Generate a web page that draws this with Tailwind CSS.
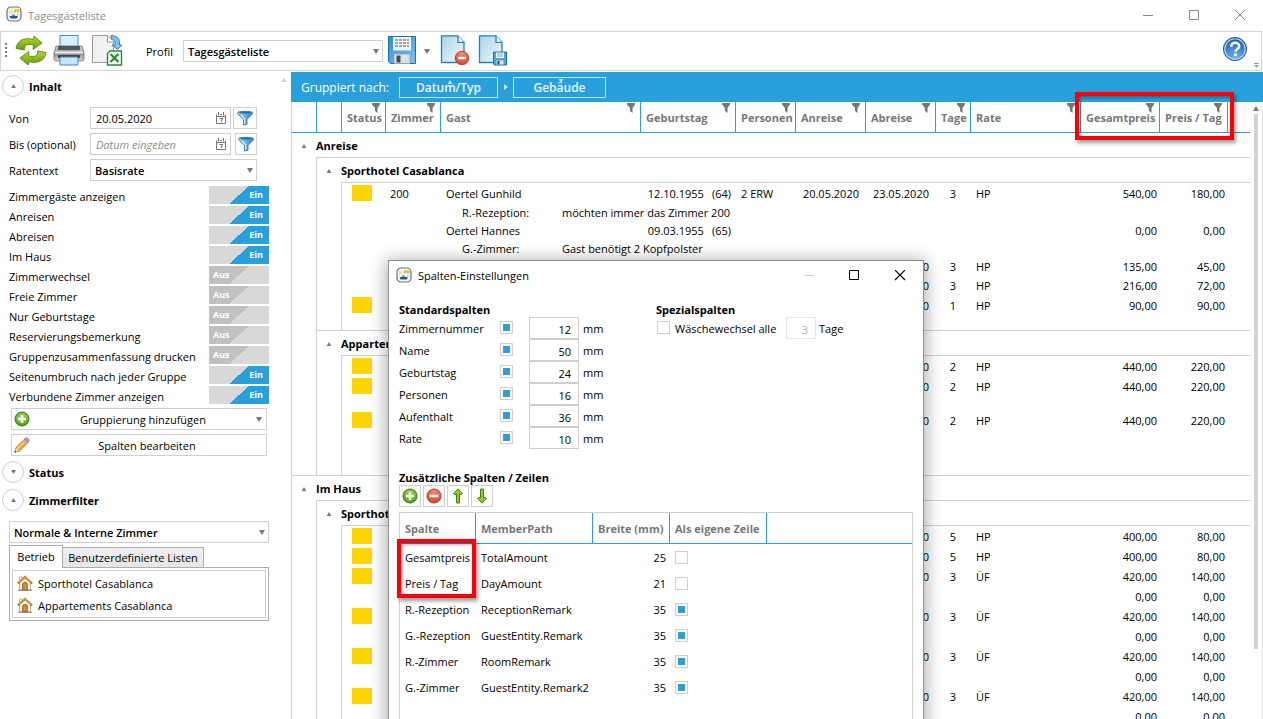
<!DOCTYPE html>
<html lang="de">
<head>
<meta charset="utf-8">
<meta name="viewport" content="width=device-width, initial-scale=1">
<title>Tagesgästeliste</title>
<script src="https://cdn.jsdelivr.net/npm/@tailwindcss/browser@4"></script>
</head>
<body class="bg-white text-black text-[11px] leading-[18px] font-['Open_Sans',sans-serif]">

<!-- Shared symbols -->
<svg class="absolute h-0 w-0" aria-hidden="true">
  <defs>
    <linearGradient id="gGreen" x1="0" y1="0" x2="0" y2="1"><stop offset="0" stop-color="#b4dc2c"/><stop offset="1" stop-color="#5f9e0e"/></linearGradient>
    <linearGradient id="gBlue" x1="0" y1="0" x2="1" y2="0"><stop offset="0" stop-color="#a8d8f6"/><stop offset="1" stop-color="#2f86cc"/></linearGradient>
    <linearGradient id="gPage" x1="0" y1="0" x2="1" y2="1"><stop offset="0" stop-color="#a9d4e4"/><stop offset="1" stop-color="#f2fafc"/></linearGradient>
    <linearGradient id="gDisk" x1="0" y1="0" x2="1" y2="1"><stop offset="0" stop-color="#2b8fd6"/><stop offset="1" stop-color="#7cc4f2"/></linearGradient>
    <linearGradient id="gGrey" x1="0" y1="0" x2="0" y2="1"><stop offset="0" stop-color="#d2d2d2"/><stop offset=".5" stop-color="#8d8d8d"/><stop offset="1" stop-color="#d8d8d8"/></linearGradient>
    <radialGradient id="gPlus" cx=".5" cy=".3" r=".8"><stop offset="0" stop-color="#9ed84a"/><stop offset="1" stop-color="#3f9a10"/></radialGradient>
    <radialGradient id="gMinus" cx=".5" cy=".2" r=".9"><stop offset="0" stop-color="#f58a70"/><stop offset="1" stop-color="#d63a28"/></radialGradient>
    <radialGradient id="gHelp" cx=".5" cy=".9" r=".9"><stop offset="0" stop-color="#6fb6f2"/><stop offset="1" stop-color="#1b57a8"/></radialGradient>
  </defs>
  <symbol id="app" viewBox="0 0 16 16">
    <rect x="1" y="1" width="14" height="14" rx="4" fill="#f6f8f2" stroke="#6b7478" stroke-width="1.200"/>
    <path d="M3 4.500h1.500V8H3zM5 3.500h1.500V8H5z" fill="#efe3a0"/><path d="M8 3.500h3L10 6.500H8z" fill="#f0b020"/><path d="M11 3h2.500v3.500H11z" fill="#e8c23a"/>
    <path d="M3.500 10h8v1.500l-1 1h-6z" fill="#245a80"/><path d="M6 8.500h3v1.500H6z" fill="#5c9ac0"/><path d="M11 8h1.500v1.500H11z" fill="#9fb8c2"/>
  </symbol>
  <symbol id="up" viewBox="0 0 6 5"><path d="M3 0 6 5H0z" fill="currentColor"/></symbol>
  <symbol id="down" viewBox="0 0 6 5"><path d="M3 5 6 0H0z" fill="currentColor"/></symbol>
  <symbol id="filter" viewBox="0 0 8 10"><path d="M0 0h8v1.500L5.500 5v5L3 8V5L0 1.500z" fill="#777"/></symbol>
  <symbol id="funnel" viewBox="0 0 16 16">
    <path d="M.6 2.500C.6 1 15.400 1 15.400 2.500v1.300L10 9.500v4.800L6.500 15V9.500L.6 3.800z" fill="url(#gBlue)" stroke="#2b78b8" stroke-width=".9"/>
    <ellipse cx="8" cy="2.600" rx="6" ry="1" fill="#1f6fae"/><path d="M4 5l3.600 4v5" stroke="#dff2fd" stroke-width="1.200" fill="none"/>
  </symbol>
  <symbol id="cal" viewBox="0 0 10 12">
    <path d="M.5 2.500v9h9v-9M.5 4.500h9" fill="none" stroke="#777"/><path d="M2.500 0v3.500M7.500 0v3.500M4 2.500h2" stroke="#777" fill="none"/>
    <path d="M3.500 6.500h3L5 10" stroke="#777" stroke-width="1.100" fill="none"/>
  </symbol>
  <symbol id="plus" viewBox="0 0 16 16"><circle cx="8" cy="8" r="7" fill="url(#gPlus)" stroke="#2f7d0c"/><path d="M8 4v8M4 8h8" stroke="#fff" stroke-width="2.600"/></symbol>
  <symbol id="minus" viewBox="0 0 16 16"><circle cx="8" cy="8" r="7" fill="url(#gMinus)" stroke="#c03526"/><path d="M3.500 8h9" stroke="#fff" stroke-width="2.600"/></symbol>
  <symbol id="arrowup" viewBox="0 0 16 16"><path d="M8 .8 12.300 5.500 10.800 7 9.500 6v9h-3V6L5.200 7 3.700 5.500z" fill="#8fcb1e" stroke="#3f8410" stroke-width="1"/></symbol>
  <symbol id="arrowdown" viewBox="0 0 16 16"><path d="M8 15.200 12.300 10.500 10.800 9 9.500 10V1h-3v9L5.200 9 3.700 10.500z" fill="#8fcb1e" stroke="#3f8410" stroke-width="1"/></symbol>
  <symbol id="pencil" viewBox="0 0 16 16">
    <path d="M.8 15.200 2 10.500 11 1.800l3.400 3.400L5.500 14z" fill="#f7a531" stroke="#a8651a" stroke-width=".8"/><path d="M3.500 11.500l8-7.800" stroke="#ffd68a" stroke-width="1.300"/>
    <path d="M10.500 2.200 12 .8c1-.8 3.800 1.800 3 3L13.800 5.500z" fill="#d78bc0" stroke="#8c6a86" stroke-width=".7"/><path d="M9.500 3.200l3.400 3.400" stroke="#9cc4cf" stroke-width="1.500"/>
    <path d="M.8 15.200 2 10.800l3.300 3.100z" fill="#f4d9ae"/><path d="M.6 15.500l.6-2 1.400 1.300z" fill="#333"/>
  </symbol>
  <symbol id="house" viewBox="0 0 16 16">
    <path d="M2.500 2h2.500v4H2.500z" fill="#fff" stroke="#999" stroke-width=".7"/><path d="M2.500 7 8 2.500 13.500 7v8h-11z" fill="#f7f0de" stroke="#8a8a8a" stroke-width=".7"/>
    <path d="M.8 8.500 8 1.800l7.200 6.700" fill="none" stroke="#b9741c" stroke-width="2"/><path d="M2 7.300 8 1.700l6 5.600" fill="none" stroke="#eebc60" stroke-width=".7"/>
    <path d="M5.700 15V9q0-1.500 2.300-1.500T10.300 9v6z" fill="#d6902c" stroke="#7c4c12" stroke-width=".8"/><path d="M1 15.300h14" stroke="#888"/>
  </symbol>
</svg>

<div class="relative flex h-screen flex-col overflow-hidden">

  <!-- Window title bar -->
  <header class="flex h-[31px] shrink-0 items-center text-[#8c8c8c]">
    <svg class="mb-1 ml-1.5 h-4 w-4"><use href="#app"/></svg>
    <h1 class="ml-1.5">Tagesgästeliste</h1>
    <div class="ml-auto flex">
      <button class="grid h-[30px] w-[46px] place-items-center" aria-label="Minimieren"><svg class="h-3 w-3" viewBox="0 0 12 12" stroke="#888"><path d="M1 5.500h10"/></svg></button>
      <button class="grid h-[30px] w-[46px] place-items-center" aria-label="Maximieren"><svg class="h-3 w-3" viewBox="0 0 12 12" stroke="#888" fill="none"><path d="M1.500 .5h9v9h-9z"/></svg></button>
      <button class="grid h-[30px] w-[46px] place-items-center" aria-label="Schließen"><svg class="h-3 w-3" viewBox="0 0 12 12" stroke="#888"><path d="M1 0l10 10M11 0L1 10"/></svg></button>
    </div>
  </header>

  <!-- Toolbar -->
  <div class="mr-px flex h-10 shrink-0 items-center border border-[#d6d6d6]" role="toolbar">
    <svg class="ml-1 h-[17px] w-[2px] shrink-0" viewBox="0 0 2 17" fill="#777"><path d="M0 0h2v2H0zM0 4h2v2H0zM0 8h2v2H0zM0 12h2v2H0z"/></svg>
    <button class="ml-2 h-8 w-8" aria-label="Aktualisieren"><svg class="h-8 w-8" viewBox="0 0 32 32" stroke="#5a8a10" stroke-width=".9" fill="url(#gGreen)">
      <path d="M1 13.500C2 5 10 2 18 4.500l1-3.500 8 7-9 6.500.5-4.500C13 8.500 8.500 10 9.500 15z"/>
      <path d="M31 17.500C30 26 22 29 14 26.500l-1 3.500-8-7 9-6.500-.5 4.500C19 22.500 23.500 21 22.500 16z"/></svg></button>
    <button class="ml-1.5 h-8 w-8" aria-label="Drucken"><svg class="h-8 w-8" viewBox="0 0 32 32">
      <path d="M3 11h26l2 7v6q0 2-2 2H3q-2 0-2-2v-6z" fill="url(#gGrey)" stroke="#777" stroke-width=".8"/>
      <path d="M7 .5h18V11H7z" fill="#d7eefb" stroke="#3b8cc6"/><path d="M5 11h22v4H5z" fill="#555"/><path d="M2 16.500h28v2H2z" fill="#eee"/><path d="M5 20h22v3H5z" fill="#444"/>
      <path d="M7 22h18v8H7z" fill="#c4e5f8" stroke="#3b8cc6"/><path d="M26 15.500h3" stroke="#8f8"/></svg></button>
    <button class="ml-1.5 h-8 w-8" aria-label="Nach Excel exportieren"><svg class="h-8 w-8" viewBox="0 0 32 32">
      <path d="M1.500 .5h15l6 6.500v20.500h-21z" fill="#f1f1f1" stroke="#9a9a9a"/><path d="M16.500 .5V7h6" fill="#fff" stroke="#9a9a9a"/>
      <path d="M20 .5c7 0 9 4 8.500 9.500H31l-4.500 4.500L21 10h3c.5-3-1-6-4-6z" fill="#7fc0ea" stroke="#2f7db8" stroke-width=".9"/>
      <path d="M19 16h11.500v14H16.500V18.500z" fill="#f6fbf4" stroke="#2c8a36" stroke-width="1.400"/><path d="M19.500 19l8 8M27.500 19l-8 8" stroke="#2c8a36" stroke-width="2.300"/></svg></button>
    <label for="profil" class="ml-[23px] w-[29px] pt-0.5">Profil</label>
    <div class="ml-2 grid w-[200px] items-center">
      <select id="profil" class="[grid-area:1/1] h-[22px] w-full appearance-none border border-[#cfcfcf] bg-white pt-px pl-1 font-semibold outline-none"><option>Tagesgästeliste</option></select>
      <svg class="[grid-area:1/1] pointer-events-none mr-1 h-[5px] w-[6px] justify-self-end text-[#777]"><use href="#down"/></svg>
    </div>
    <button class="ml-1 h-8 w-[30px]" aria-label="Speichern"><svg class="h-8 w-[30px]" viewBox="0 0 30 32">
      <path d="M1.500 1.500h27v27H3.500l-2-2z" fill="url(#gDisk)" stroke="#1b6fae"/><path d="M6 2h18v13.500H6z" fill="#eef6fb"/>
      <path d="M8 5h14M8 8h14M8 11h14" stroke="#555" stroke-width="1.200" stroke-dasharray="3 1"/><path d="M7 19h16v9.500H7z" fill="#dce2e8" stroke="#8ea6b8" stroke-width=".8"/><path d="M9.500 20.500h4v7h-4z" fill="#484c50"/></svg></button>
    <button class="ml-0.5 grid h-8 w-4 place-items-center" aria-label="Speicheroptionen"><svg class="h-[5px] w-[6px] text-[#777]"><use href="#down"/></svg></button>
    <button class="ml-[5px] h-8 w-8" aria-label="Profil löschen"><svg class="h-8 w-8" viewBox="0 0 32 32">
      <path d="M1.500 .8H18l6 6.500v20.200H1.500z" fill="url(#gPage)" stroke="#1d86c0" stroke-width="1.300"/><path d="M18 .8v6.500h6" fill="#fff" stroke="#1d86c0" stroke-width="1.300"/>
      <circle cx="22" cy="23" r="6.800" fill="url(#gMinus)" stroke="#b5301f" stroke-width=".8"/><path d="M18 23h8" stroke="#fff" stroke-width="2.400"/></svg></button>
    <button class="ml-1.5 h-8 w-8" aria-label="Profil speichern unter"><svg class="h-8 w-8" viewBox="0 0 32 32">
      <path d="M1.500 .8H18l6 6.500v20.200H1.500z" fill="url(#gPage)" stroke="#1d86c0" stroke-width="1.300"/><path d="M18 .8v6.500h6" fill="#fff" stroke="#1d86c0" stroke-width="1.300"/>
      <path d="M15.500 17H28.500v13H16.500l-1-1z" fill="#4aa6de" stroke="#1b6fae"/><path d="M18 17.500h8V23h-8z" fill="#eef6fb"/><path d="M19 19h6M19 21h6" stroke="#888" stroke-width=".8"/><path d="M18.500 25.500h7v4h-7z" fill="#dce2e8"/><path d="M19.500 26h2v3.500h-2z" fill="#444"/></svg></button>
    <button class="mr-[5px] mb-1 ml-auto h-[26px] w-[26px]" aria-label="Hilfe"><svg class="h-[26px] w-[26px]" viewBox="0 0 28 28"><circle cx="14" cy="14" r="12.500" fill="url(#gHelp)" stroke="#1b4f94"/><circle cx="14" cy="14" r="11" fill="none" stroke="#b9d8f4" stroke-width="1.200"/>
      <path d="M10 11.500c0-5.500 8.500-5.500 8.500-.5 0 3-4 3.200-4 6" fill="none" stroke="#fff" stroke-width="2.600"/><path d="M13 18.800h3v2.800h-3z" fill="#fff"/></svg></button>
    <svg class="mr-px mb-0.5 h-[5px] w-[7px] self-end" viewBox="0 0 7 5" fill="#999"><path d="M1 0h5v1H1zM1 2h5L3.500 4.800z"/></svg>
  </div>

  <main class="flex min-h-0 grow">

    <!-- Filter panel -->
    <aside class="flex w-[291px] shrink-0 flex-col pt-1">
      <div class="flex items-center">
        <button class="ml-0.5 grid h-[22px] w-[22px] place-items-center rounded-full border border-[#cfcfcf] text-[#777]" aria-label="Inhalt einklappen"><svg class="h-[4px] w-[5px]"><use href="#up"/></svg></button>
        <h2 class="ml-[5px] pt-0.5 font-bold">Inhalt</h2>
        <svg class="mr-1 mb-3 ml-auto h-[4px] w-[6px] text-[#ccc]"><use href="#up"/></svg>
      </div>
      <div class="mt-[10px] ml-[9px] flex w-[248px] flex-col gap-1">
        <div class="flex h-[22px] items-center">
          <label for="von" class="w-[81px] pt-0.5">Von</label>
          <div class="flex h-[22px] grow items-center border border-[#cfcfcf] pr-1"><input id="von" class="w-0 grow pt-0.5 pl-[5px] outline-none" value="20.05.2020"><svg class="h-3 w-[10px]"><use href="#cal"/></svg></div>
          <button class="ml-0.5 grid h-[22px] w-6 place-items-center border border-[#cfcfcf]" aria-label="Filter Von"><svg class="h-4 w-4"><use href="#funnel"/></svg></button>
        </div>
        <div class="flex h-[22px] items-center">
          <label for="bis" class="w-[81px] pt-0.5">Bis (optional)</label>
          <div class="flex h-[22px] grow items-center border border-[#cfcfcf] pr-1"><input id="bis" class="w-0 grow pt-0.5 pl-[5px] outline-none placeholder:text-[#8c8c8c] placeholder:italic" placeholder="Datum eingeben"><svg class="h-3 w-[10px]"><use href="#cal"/></svg></div>
          <button class="ml-1 grid h-[22px] w-[22px] place-items-center border border-[#cfcfcf]" aria-label="Filter Bis"><svg class="h-4 w-4"><use href="#funnel"/></svg></button>
        </div>
        <div class="flex h-[22px] items-center">
          <label for="rate" class="w-[81px] pt-0.5">Ratentext</label>
          <div class="grid grow items-center">
            <select id="rate" class="[grid-area:1/1] h-[22px] w-full appearance-none border border-[#cfcfcf] bg-white pt-px pl-1 font-semibold outline-none"><option>Basisrate</option></select>
            <svg class="[grid-area:1/1] pointer-events-none mr-1 h-[5px] w-[6px] justify-self-end text-[#777]"><use href="#down"/></svg>
          </div>
        </div>
      </div>
      <div id="toggles" class="mt-1 ml-[9px] w-[260px]"></div>
      <div class="mt-[3px] ml-[11px] flex w-[256px] flex-col gap-1">
        <button class="flex h-[22px] items-center border border-[#cfcfcf] px-[2px]"><svg class="h-4 w-4"><use href="#plus"/></svg><span class="grow pt-0.5">Gruppierung hinzufügen</span><svg class="mr-0.5 h-[5px] w-[6px] text-[#777]"><use href="#down"/></svg></button>
        <button class="flex h-[22px] items-center border border-[#cfcfcf] px-[2px]"><svg class="h-4 w-4"><use href="#pencil"/></svg><span class="grow pt-0.5">Spalten bearbeiten</span></button>
      </div>
      <div class="mt-[5px] flex items-center">
        <button class="ml-0.5 grid h-[22px] w-[22px] place-items-center rounded-full border border-[#cfcfcf] text-[#777]" aria-label="Status ausklappen"><svg class="h-[4px] w-[5px]"><use href="#down"/></svg></button>
        <h2 class="ml-[5px] pt-0.5 font-bold">Status</h2>
      </div>
      <div class="mt-1.5 flex items-center">
        <button class="ml-0.5 grid h-[22px] w-[22px] place-items-center rounded-full border border-[#cfcfcf] text-[#777]" aria-label="Zimmerfilter einklappen"><svg class="h-[4px] w-[5px]"><use href="#up"/></svg></button>
        <h2 class="ml-[5px] pt-0.5 font-bold">Zimmerfilter</h2>
      </div>
      <div class="mt-[10px] ml-[9px] w-[260px]">
        <div class="grid items-center">
          <select aria-label="Zimmerart" class="[grid-area:1/1] h-[22px] w-full appearance-none border border-[#cfcfcf] bg-white pt-px pl-1 font-semibold outline-none"><option>Normale &amp; Interne Zimmer</option></select>
          <svg class="[grid-area:1/1] pointer-events-none mr-1 h-[5px] w-[6px] justify-self-end text-[#777]"><use href="#down"/></svg>
        </div>
        <div class="mt-0.5 flex items-end" role="tablist">
          <button role="tab" aria-selected="true" class="z-10 -mb-px h-[23px] w-[54px] border border-b-0 border-[#acacac] bg-white">Betrieb</button>
          <button role="tab" aria-selected="false" class="-ml-px h-5 w-[142px] border border-b-0 border-[#acacac] bg-gradient-to-b from-[#f0f0f0] to-[#e5e5e5] pt-px whitespace-nowrap">Benutzerdefinierte Listen</button>
        </div>
        <div class="border border-[#acacac] p-0.5">
          <ul class="border border-[#cfcfcf] px-1 py-px">
            <li class="flex h-[22px] items-center gap-[5px]"><svg class="h-4 w-4"><use href="#house"/></svg><span class="pt-0.5">Sporthotel Casablanca</span></li>
            <li class="flex h-[22px] items-center gap-[5px]"><svg class="h-4 w-4"><use href="#house"/></svg><span class="pt-0.5">Appartements Casablanca</span></li>
          </ul>
        </div>
      </div>
    </aside>

    <!-- Guest list -->
    <section class="flex min-w-0 grow flex-col pt-px">
      <div class="flex h-[30px] shrink-0 items-center bg-[#27a0db] pl-[10px] text-white">
        <span class="w-[98px] pt-0.5 text-[12px]">Gruppiert nach:</span>
        <button class="relative h-[21px] w-[99px] border border-white/70 pt-px text-[12px] font-semibold text-white/90">Datum/Typ<svg class="absolute top-[2px] left-[47px] h-[4px] w-[6px] text-white/70"><use href="#up"/></svg></button>
        <svg class="mr-[5px] ml-1.5 h-[6px] w-[4px]" viewBox="0 0 4 6" fill="#cfeaf8"><path d="M0 0l4 3-4 3z"/></svg>
        <button class="relative h-[21px] w-[93px] border border-white/70 pt-px text-[12px] font-semibold text-white/90">Gebäude<svg class="absolute top-[1px] left-[44px] h-[4px] w-[6px] text-white/70"><use href="#down"/></svg></button>
      </div>
      <div class="flex min-h-0 grow">
        <div class="min-w-0 grow overflow-hidden">
          <table class="w-full table-fixed border-separate border-spacing-0 leading-4 whitespace-nowrap">
            <colgroup><col class="w-[25px]"><col class="w-[25px]"><col class="w-[44px]"><col class="w-[55px]"><col class="w-[200px]"><col class="w-[95px]"><col class="w-[60px]"><col class="w-[70px]"><col class="w-[70px]"><col class="w-[35px]"><col class="w-[110px]"><col class="w-[79px]"><col class="w-[68px]"><col></colgroup>
            <thead><tr id="head" class="h-[31px]"></tr></thead>
            <tbody id="rows"></tbody>
          </table>
        </div>
        <div class="flex w-[13px] shrink-0 flex-col items-center border-r border-[#e0e0e0] pt-1" aria-hidden="true">
          <svg class="mb-[3px] h-[5px] w-[6px] text-[#777]"><use href="#up"/></svg>
          <div class="h-[535px] w-1 bg-[#d2d2d2]"></div>
        </div>
      </div>
    </section>
  </main>

  <!-- Marker around the two price columns -->
  <div class="pointer-events-none absolute top-[92px] left-[1075px] h-[48px] w-[159px] border-4 border-[#fb0007] shadow-[2px_3px_4px_rgba(0,0,0,0.4),inset_2px_2px_3px_rgba(0,0,0,0.3)]"></div>

  <!-- Column settings dialog -->
  <div role="dialog" aria-labelledby="dlgTitle" class="absolute top-[260px] left-[388px] h-[480px] w-[536px] border border-[#909090] bg-white pl-[10px] shadow-[0_2px_16px_2px_rgba(0,0,0,0.32)]">
    <div class="flex h-[30px] items-center">
      <svg class="mb-0.5 -ml-[3px] h-4 w-4"><use href="#app"/></svg>
      <h2 id="dlgTitle" class="ml-1.5">Spalten-Einstellungen</h2>
      <div class="ml-auto flex">
        <button disabled class="grid h-[30px] w-[46px] place-items-center" aria-label="Dialog minimieren"><svg class="h-3 w-3" viewBox="0 0 12 12" stroke="#ccc"><path d="M0 5.500h10"/></svg></button>
        <button class="grid h-[30px] w-[44px] place-items-center" aria-label="Dialog maximieren"><svg class="h-3 w-3" viewBox="0 0 12 12" stroke="#000" fill="none"><path d="M.5 .5h9v9h-9z"/></svg></button>
        <button class="grid h-[30px] w-[46px] place-items-center" aria-label="Dialog schließen"><svg class="h-3 w-3" viewBox="0 0 12 12" stroke="#000" stroke-width="1.100"><path d="M1 0l10 10M11 0L1 10"/></svg></button>
      </div>
    </div>
    <div class="mt-[10px] flex">
      <div class="w-[257px]">
        <h3 class="h-4 font-bold">Standardspalten</h3>
        <div id="std"></div>
      </div>
      <div>
        <h3 class="h-4 font-bold">Spezialspalten</h3>
        <div class="flex h-[22px] items-center">
          <input id="wasch" type="checkbox" class="mb-0.5 ml-px h-[13px] w-[13px] appearance-none border border-[#cfcfcf] p-[2px]">
          <label for="wasch" class="ml-[5px] w-[111px] pt-0.5">Wäschewechsel alle</label>
          <input disabled value="3" aria-label="Intervall in Tagen" class="h-[22px] w-[30px] border border-[#e6e6e6] pt-0.5 pr-[7px] text-right text-[#b5b5b5]">
          <span class="ml-[3px] pt-0.5">Tage</span>
        </div>
      </div>
    </div>
    <h3 class="mt-[20px] h-4 font-bold">Zusätzliche Spalten / Zeilen</h3>
    <div class="flex gap-0.5">
      <button class="grid h-[22px] w-[22px] place-items-center border border-[#cfcfcf]" aria-label="Hinzufügen"><svg class="h-4 w-4"><use href="#plus"/></svg></button>
      <button class="grid h-[22px] w-[22px] place-items-center border border-[#cfcfcf]" aria-label="Entfernen"><svg class="h-4 w-4"><use href="#minus"/></svg></button>
      <button class="grid h-[22px] w-[22px] place-items-center border border-[#cfcfcf]" aria-label="Nach oben"><svg class="h-4 w-4"><use href="#arrowup"/></svg></button>
      <button class="grid h-[22px] w-[22px] place-items-center border border-[#cfcfcf]" aria-label="Nach unten"><svg class="h-4 w-4"><use href="#arrowdown"/></svg></button>
    </div>
    <div class="mt-[5px] mr-[10px] h-[240px] border border-[#cfcfcf]">
      <table class="w-full table-fixed border-separate border-spacing-0 whitespace-nowrap">
        <colgroup><col class="w-[76px]"><col class="w-[117px]"><col class="w-[77px]"><col class="w-[97px]"><col></colgroup>
        <thead><tr class="h-[31px] text-left text-[#777]">
          <th class="border-r border-b border-[#27a0db] pt-0.5 pl-[5px] font-bold">Spalte</th>
          <th class="border-r border-b border-[#27a0db] pt-0.5 pl-[5px] font-bold">MemberPath</th>
          <th class="border-r border-b border-[#27a0db] pt-0.5 pl-[5px] font-bold">Breite (mm)</th>
          <th class="border-r border-b border-[#27a0db] pt-0.5 pl-[5px] font-bold">Als eigene Zeile</th>
          <th class="border-b border-[#27a0db]"></th>
        </tr></thead>
        <tbody id="extra"></tbody>
      </table>
    </div>
  </div>

  <!-- Marker around the two extra columns -->
  <div class="pointer-events-none absolute top-[539px] left-[397px] h-[59px] w-[79px] border-4 border-[#fb0007] shadow-[2px_3px_4px_rgba(0,0,0,0.4),inset_2px_2px_3px_rgba(0,0,0,0.3)]"></div>
</div>

<script>
const $ = id => document.getElementById(id);

// Display options
$('toggles').innerHTML = [['Zimmergäste anzeigen',1],['Anreisen',1],['Abreisen',1],['Im Haus',1],['Zimmerwechsel',0],['Freie Zimmer',0],['Nur Geburtstage',0],['Reservierungsbemerkung',0],['Gruppenzusammenfassung drucken',0],['Seitenumbruch nach jeder Gruppe',1],['Verbundene Zimmer anzeigen',1]]
.map(([t, on], i) => `<div class="flex h-5 items-center justify-between"><label for="t${i}" class="pt-1 whitespace-nowrap">${t}</label>
<div class="grid h-[18px] w-[60px] shrink-0 text-[9px] font-bold leading-[18px] text-white">
<input id="t${i}" type="checkbox" ${on ? 'checked' : ''} class="[grid-area:1/1] appearance-none bg-[linear-gradient(138deg,#c0c0c0_50%,#d8d8d8_50%)] checked:bg-[linear-gradient(138deg,#d8d8d8_50%,#27a0db_50%)]">
<span class="${on ? '[grid-area:1/1] pointer-events-none justify-self-end pr-1.5' : '[grid-area:1/1] pointer-events-none pl-1'}">${on ? 'Ein' : 'Aus'}</span></div></div>`).join('');

// Column headers
$('head').innerHTML = '<th class="border-b border-l border-b-[#27a0db] border-l-[#cfcfcf]"></th><th class="border-b border-l border-[#27a0db]"></th>' +
['Status','Zimmer','Gast','Geburtstag','Personen','Anreise','Abreise','Tage','Rate','Gesamtpreis','Preis / Tag']
.map(h => `<th class="relative border-b border-l border-[#27a0db] pt-0.5 pl-[5px] text-left font-bold text-[#777]">${h}<svg class="absolute top-[1px] right-[5px] h-[10px] w-2"><use href="#filter"/></svg></th>`).join('') +
'<th class="border-b border-l border-[#27a0db]"></th>';

// Guest rows
const l0 = '<td class="border-l border-[#cfcfcf]"></td>', l1 = '<td class="border-l border-[#cfcfcf]"></td>';
const caret = '<td class="border-l border-[#cfcfcf] pl-[9px]"><svg class="h-[4px] w-[6px] text-[#777]"><use href="#up"/></svg></td>';
const g0 = t => `<tr class="h-[25px]">${caret}<td colspan="13" class="border-b border-[#cfcfcf] pt-0.5 font-bold">${t}</td></tr>`;
const g1 = t => `<tr class="h-[25px]">${l0}${caret}<td colspan="12" class="border-b border-[#cfcfcf] pt-0.5 font-bold">${t}</td></tr>`;
const row = (h, y, zi, gast, geb, alter, pers, an, ab, tage, rate, ges, ptag) => `<tr class="${h}">${l0}${l1}
<td class="border-l border-[#cfcfcf] pl-[10px]">${y ? '<div class="h-4 w-5 bg-[#ffd500]"></div>' : ''}</td><td class="pt-0.5 pl-[5px]">${zi}</td><td class="pt-0.5 pl-1.5">${gast}</td>
<td class="pt-0.5 pr-1 text-right">${geb ? `${geb}<span class="ml-2">${alter}</span>` : ''}</td><td class="pt-0.5 pl-1.5">${pers}</td><td class="pt-0.5 pr-1.5 text-right">${an}</td><td class="pt-0.5 pr-1.5 text-right">${ab}</td>
<td class="pt-0.5 pr-[14px] text-right">${tage}</td><td class="pt-0.5 pl-1.5">${rate}</td><td class="pt-0.5 pr-[2px] text-right">${ges}</td><td class="pt-0.5 pr-[2px] text-right">${ptag}</td><td></td></tr>`;
const note = (k, v) => `<tr class="h-[18px]">${l0}${l1}<td class="border-l border-[#cfcfcf]"></td><td></td><td colspan="10" class="pt-0.5 pl-[22px]"><div class="flex"><span class="w-[100px]">${k}</span><span>${v}</span></div></td></tr>`;
const gap = (h, c0, c1) => `<tr class="${h}"><td class="${c0}"></td><td class="${c1}"></td><td colspan="12" class="${c1}"></td></tr>`;
const L = 'border-l border-[#cfcfcf]', LB = 'border-l border-b border-[#cfcfcf]';
const r = (y, tage, rate, ges, ptag, ab = '23.05.2020') => row('h-5', y, '', '', '', '', '', tage ? '20.05.2020' : '', tage ? ab : '', tage, rate, ges, ptag);
$('rows').innerHTML =
  g0('Anreise') + g1('Sporthotel Casablanca') +
  row('h-5', 1, '200', 'Oertel Gunhild', '12.10.1955', '(64)', '2 ERW', '20.05.2020', '23.05.2020', '3', 'HP', '540,00', '180,00') +
  note('R.-Rezeption:', 'möchten immer das Zimmer 200') +
  row('h-[18px]', 0, '', 'Oertel Hannes', '09.03.1955', '(65)', '', '', '', '', '', '0,00', '0,00') +
  note('G.-Zimmer:', 'Gast benötigt 2 Kopfpolster') +
  row('h-[18px]', 0, '', '', '', '', '', '20.05.2020', '23.05.2020', '3', 'HP', '135,00', '45,00') +
  r(0, '3', 'HP', '216,00', '72,00') + r(1, '1', 'HP', '90,00', '90,00', '21.05.2020') +
  gap('h-4', L, LB) + g1('Appartements Casablanca') +
  r(1, '2', 'HP', '440,00', '220,00', '22.05.2020') + r(1, '2', 'HP', '440,00', '220,00', '22.05.2020') + gap('h-[14px]', L, L) +
  r(1, '2', 'HP', '440,00', '220,00', '22.05.2020') + gap('h-[46px]', LB, LB) +
  g0('Im Haus') + g1('Sporthotel Casablanca') +
  r(1, '5', 'HP', '400,00', '80,00') + r(1, '5', 'HP', '400,00', '80,00') +
  (r(1, '3', 'ÜF', '420,00', '140,00') + r(0, '', '', '0,00', '0,00')).repeat(4);

// Standard columns
$('std').innerHTML = [['Zimmernummer',12],['Name',50],['Geburtstag',24],['Personen',16],['Aufenthalt',36],['Rate',10]]
.map(([t, v], i) => `<div class="flex h-[22px] items-center"><label for="s${i}" class="w-[101px] pt-0.5">${t}</label>
<input id="s${i}" type="checkbox" checked class="mb-0.5 h-[13px] w-[13px] appearance-none border border-[#cfcfcf] bg-clip-content p-[2px] checked:bg-[#27a0db]">
<input value="${v}" aria-label="${t} Breite" class="ml-4 h-[22px] w-[50px] border border-[#cfcfcf] pt-0.5 pr-[7px] text-right"><span class="ml-1 pt-0.5">mm</span></div>`).join('');

// Additional columns
$('extra').innerHTML = [['Gesamtpreis','TotalAmount',25,0],['Preis / Tag','DayAmount',21,0],['R.-Rezeption','ReceptionRemark',35,1],['G.-Rezeption','GuestEntity.Remark',35,1],['R.-Zimmer','RoomRemark',35,1],['G.-Zimmer','GuestEntity.Remark2',35,1]]
.map(([a, b, w, c]) => `<tr class="h-[26px]"><td class="pt-0.5 pl-[5px]">${a}</td><td class="pt-0.5 pl-[5px]">${b}</td><td class="pt-0.5 pr-1 text-right">${w}</td>
<td class="pl-[5px]"><input type="checkbox" aria-label="${a} als eigene Zeile" ${c ? 'checked' : ''} class="block h-[13px] w-[13px] appearance-none border border-[#cfcfcf] bg-clip-content p-[2px] checked:bg-[#27a0db]"></td><td></td></tr>`).join('');
</script>
</body>
</html>
